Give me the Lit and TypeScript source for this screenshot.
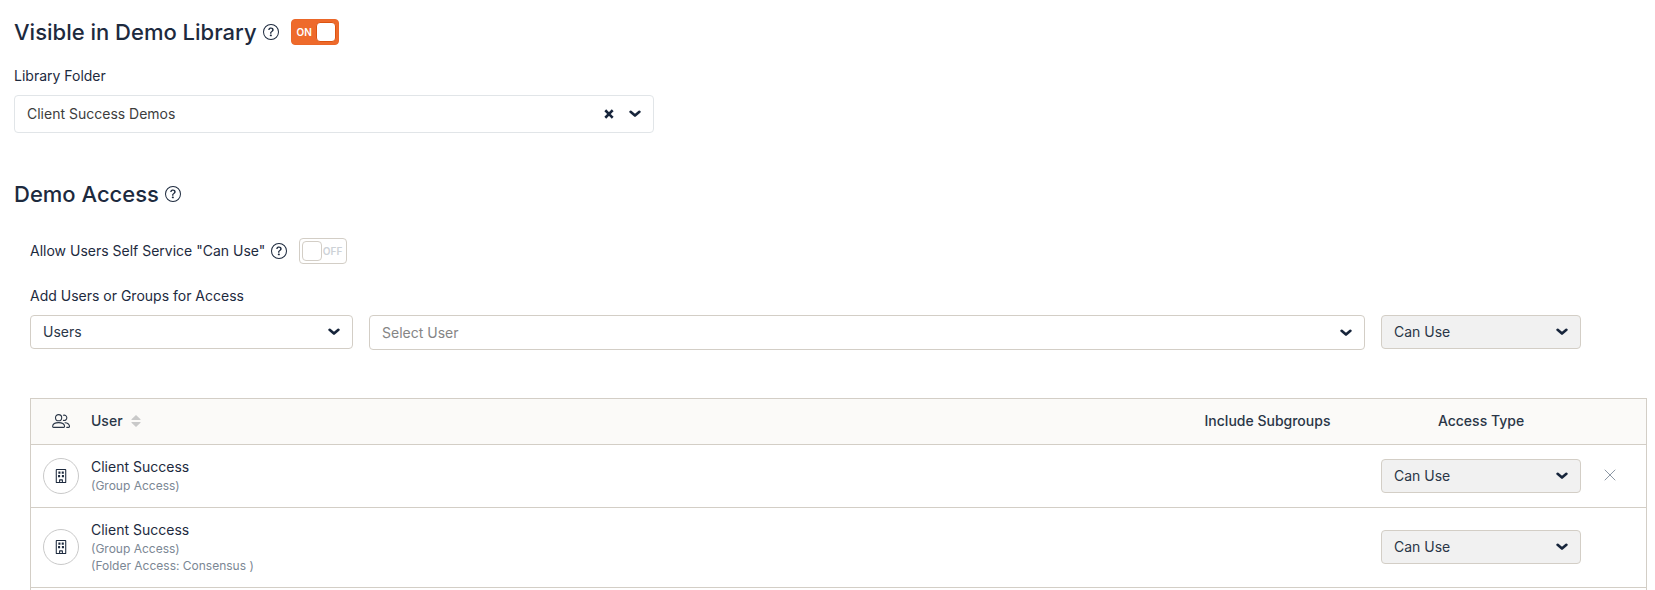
import { LitElement, html, css, svg, nothing } from "lit";
import { customElement, property, state } from "lit/decorators.js";

const chevron = html`<svg class="chevron" width="12" height="8" viewBox="0 0 12 8" aria-hidden="true">
  <path d="M1.6 1.8 6 5.6l4.4-3.8" fill="none" stroke="currentColor" stroke-width="2.6" stroke-linecap="round" stroke-linejoin="round" />
</svg>`;

const help = html`<svg width="16" height="16" viewBox="0 0 16 16" aria-hidden="true" fill="currentColor">
  <path d="M8 15A7 7 0 1 1 8 1a7 7 0 0 1 0 14m0 1A8 8 0 1 0 8 0a8 8 0 0 0 0 16" />
  <path d="M5.255 5.786a.237.237 0 0 0 .241.247h.825c.138 0 .248-.113.266-.25.09-.656.54-1.134 1.342-1.134.686 0 1.314.343 1.314 1.168 0 .635-.374.927-.965 1.371-.673.489-1.206 1.06-1.168 1.987l.003.217a.25.25 0 0 0 .25.246h.811a.25.25 0 0 0 .25-.25v-.105c0-.718.273-.927 1.01-1.486.609-.463 1.244-.977 1.244-2.056 0-1.511-1.276-2.241-2.673-2.241-1.267 0-2.655.59-2.75 2.286m1.557 5.763c0 .533.425.927 1.01.927.609 0 1.028-.394 1.028-.927 0-.552-.42-.94-1.029-.94-.584 0-1.009.388-1.009.94" />
</svg>`;

const people = html`<svg width="18" height="14" viewBox="0 0 18 14" role="img" aria-label="Type" fill="none" stroke="currentColor" stroke-width="1.1" stroke-linecap="round" stroke-linejoin="round">
  <circle cx="6.6" cy="3.7" r="3.1" />
  <path d="M.6 12.2C.9 10 3 8.600 6.600 8.600s5.700 1.400 6 3.600c0 .8-.3 1.200-1 1.200H1.600c-.7 0-1-.4-1-1.200z" />
  <path d="M11.400 1.200a2.700 2.700 0 1 1 0 5.200" />
  <path d="M13 8.700c2.600.2 4.200 1.500 4.500 3.500 0 .8-.3 1.200-1 1.200h-1.700" />
</svg>`;

const windows = [
  [5, 2.8],
  [8.8, 2.8],
  [4.6, 6.8],
  [9, 6.8],
];

const building = html`<svg width="14" height="14" viewBox="0 0 16 16" aria-hidden="true" fill="currentColor">
  ${windows.map(([x, y]) => svg`<rect x=${x} y=${y} width="2.400" height="2.600" rx=".3" />`)}
  <path d="M2 1a1 1 0 0 1 1-1h10a1 1 0 0 1 1 1v14a1 1 0 0 1-1 1H3a1 1 0 0 1-1-1zM12.800 1.200H3.200v13.600h2.600v-2.300a.7.7 0 0 1 .7-.7h3a.7.7 0 0 1 .7.700v2.300h2.600zM9 13H7v1.800h2z" fill-rule="evenodd" />
</svg>`;

const shared = css`
  *,
  *::before {
    box-sizing: border-box;
  }
  button {
    display: inline-flex;
    align-items: center;
    justify-content: center;
    padding: 0;
    border: 0;
    background: none;
    color: inherit;
    font: inherit;
    cursor: pointer;
  }
  svg {
    display: block;
    flex: none;
  }
`;

@customElement("drop-down")
class DropDown extends LitElement {
  @property() label = "";
  @property({ type: Array }) options: string[] = [];
  @property() variant = "";
  @property({ type: Boolean }) clearable = false;

  static styles = [
    shared,
    css`
      :host {
        display: block;
        min-width: 0;
      }
      .box {
        display: flex;
        align-items: center;
        position: relative;
        height: 34px;
        border: 1px solid #d3cec6;
        border-radius: 4px;
        background: #fff;
        color: #2a3647;
      }
      .muted {
        background: #f1f1f1;
      }
      .placeholder {
        height: 35px;
      }
      .folder {
        height: 38px;
        border-color: #e1e5e8;
      }
      select {
        flex: 1;
        min-width: 0;
        height: 100%;
        padding: 0 64px 0 12px;
        border: 0;
        border-radius: 4px;
        appearance: none;
        background: none;
        color: inherit;
        font: inherit;
      }
      .placeholder select {
        color: #858585;
      }
      .folder select {
        color: #3d3d3d;
      }
      .marks {
        position: absolute;
        right: 12px;
        display: flex;
        align-items: center;
        gap: 15px;
        color: #17253b;
        pointer-events: none;
      }
      .marks button {
        pointer-events: auto;
      }
    `,
  ];

  render() {
    return html`<div class="box ${this.variant}">
      <select aria-label=${this.label}>
        ${this.options.map((o) => html`<option>${o}</option>`)}
      </select>
      <span class="marks">
        ${this.clearable
          ? html`<button type="button" aria-label="Clear">
              <svg width="10" height="10" viewBox="0 0 10 10">
                <path d="m2.200 2.200 5.600 5.600M7.800 2.200 2.200 7.800" stroke="currentColor" stroke-width="2.600" stroke-linecap="square" />
              </svg>
            </button>`
          : nothing}
        ${chevron}
      </span>
    </div>`;
  }
}

@customElement("toggle-switch")
class ToggleSwitch extends LitElement {
  @property() label = "";
  @property({ type: Boolean }) on = false;

  static styles = [
    shared,
    css`
      :host {
        display: block;
      }
      .track {
        display: flex;
        align-items: center;
        justify-content: space-between;
        width: 48px;
        height: 26px;
        padding: 0 2px 0 5px;
        border: 1px solid #eb6729;
        border-radius: 4px;
        background: #ee6a2b;
        color: #fff;
        font-size: 10px;
        font-weight: 600;
      }
      .track.off {
        flex-direction: row-reverse;
        padding: 0 4px 0 2px;
        border-color: #d3cec6;
        background: #fff;
        color: #cdd2d7;
      }
      .knob {
        width: 20px;
        height: 20px;
        border: 1px solid #dc5310;
        border-radius: 4px;
        background: #fff;
      }
      .off .knob {
        border-color: #d3cec6;
      }
    `,
  ];

  render() {
    return html`<button
      type="button"
      role="switch"
      class="track ${this.on ? "" : "off"}"
      aria-label=${this.label}
      aria-checked=${this.on ? "true" : "false"}
      @click=${() => (this.on = !this.on)}
    >
      <span>${this.on ? "ON" : "OFF"}</span><span class="knob"></span>
    </button>`;
  }
}

interface Grant {
  name: string;
  notes: string[];
  removable: boolean;
}

@customElement("app-root")
class AppRoot extends LitElement {
  @state() private grants: Grant[] = [
    { name: "Client Success", notes: ["(Group Access)"], removable: true },
    { name: "Client Success", notes: ["(Group Access)", "(Folder Access: Consensus )"], removable: false },
  ];

  static styles = [
    shared,
    css`
      :host {
        display: block;
        font: 14px/20px Inter, "Open Sans", sans-serif;
        color: #1d2a3e;
        background: #fff;
      }
      main {
        display: flex;
        flex-direction: column;
        min-height: 100vh;
        padding: 18px 8px 0 14px;
      }
      h2 {
        margin: 0;
        font-size: 22px;
        line-height: 28px;
        font-weight: 500;
      }
      .line {
        display: flex;
        align-items: center;
        gap: 6px;
      }
      .line toggle-switch {
        margin-left: 6px;
      }
      .label {
        margin-bottom: 9px;
      }
      .library {
        width: 39.2%;
        margin: 20px 0 47px;
      }
      .access {
        display: flex;
        flex: 1;
        flex-direction: column;
        padding: 30px 0 0 16px;
      }
      .add {
        margin: 22px 0 48px;
      }
      .fields {
        display: grid;
        grid-template-columns: 323fr 996fr 200px;
        align-items: start;
        gap: 16px;
        margin-right: 66px;
      }
      .panel {
        flex: 1;
        border: 1px solid #d3cec6;
        border-bottom: 0;
      }
      table {
        width: 100%;
        border-collapse: collapse;
        table-layout: fixed;
      }
      th {
        height: 45px;
        padding: 0;
        background: #fbfaf8;
        color: #2a3647;
        font-weight: 500;
      }
      tr {
        border-bottom: 1px solid #d3cec6;
      }
      td {
        padding: 12px 0;
      }
      td.user {
        padding: 11px 0 13px;
      }
      .c-type {
        width: 60px;
      }
      .c-sub {
        width: 195px;
      }
      .c-access {
        width: 232px;
      }
      .c-remove {
        width: 49px;
      }
      th svg,
      .avatar {
        margin: 0 auto;
      }
      .sort {
        gap: 8px;
        color: inherit;
        font-weight: 500;
      }
      th.user {
        text-align: left;
      }
      .sort svg {
        margin: 0;
      }
      .avatar {
        display: flex;
        align-items: center;
        justify-content: center;
        width: 36px;
        height: 36px;
        border: 1px solid #c9c9c9;
        border-radius: 50%;
      }
      .name {
        line-height: 21px;
      }
      .note {
        color: #7b8794;
        font-size: 12px;
        line-height: 17px;
      }
      .select-cell {
        padding: 0 16px;
      }
      .remove {
        margin-left: 7px;
        color: #8d98a5;
      }
    `,
  ];

  render() {
    return html`<main>
      <div class="line">
        <h2>Visible in Demo Library</h2>
        <button type="button" aria-label="Help">${help}</button>
        <toggle-switch label="Visible in Demo Library" on></toggle-switch>
      </div>
      <div class="library">
        <div class="label">Library Folder</div>
        <drop-down label="Library Folder" variant="folder" clearable .options=${["Client Success Demos"]}></drop-down>
      </div>

      <div class="line">
        <h2>Demo Access</h2>
        <button type="button" aria-label="Help">${help}</button>
      </div>
      <section class="access">
        <div class="line">
          <span>Allow Users Self Service "Can Use"</span>
          <button type="button" aria-label="Help">${help}</button>
          <toggle-switch label="Allow Users Self Service"></toggle-switch>
        </div>
        <div class="add">
          <div class="label">Add Users or Groups for Access</div>
          <div class="fields">
            <drop-down label="Users or groups" .options=${["Users", "Groups"]}></drop-down>
            <drop-down label="User" variant="placeholder" .options=${["Select User"]}></drop-down>
            <drop-down label="Access type" variant="muted" .options=${["Can Use"]}></drop-down>
          </div>
        </div>
        <div class="panel">
          <table>
            <colgroup>
              <col class="c-type" />
              <col />
              <col class="c-sub" />
              <col class="c-access" />
              <col class="c-remove" />
            </colgroup>
            <thead>
              <tr>
                <th>${people}</th>
                <th class="user">
                  <button type="button" class="sort">
                    User
                    <svg width="10" height="12" viewBox="0 0 10 12" fill="#c9c9c9" aria-hidden="true">
                      <path d="M5 0 9.500 4.200v.8H.5v-.8zM5 12 9.500 7.800V7H.5v.8z" />
                    </svg>
                  </button>
                </th>
                <th>Include Subgroups</th>
                <th>Access Type</th>
                <th></th>
              </tr>
            </thead>
            <tbody>
              ${this.grants.map(
                (g) => html`<tr>
                  <td><div class="avatar">${building}</div></td>
                  <td class="user">
                    <div class="name">${g.name}</div>
                    ${g.notes.map((n) => html`<div class="note">${n}</div>`)}
                  </td>
                  <td></td>
                  <td class="select-cell">
                    <drop-down label="Access type" variant="muted" .options=${["Can Use"]}></drop-down>
                  </td>
                  <td>
                    ${g.removable
                      ? html`<button
                          type="button"
                          class="remove"
                          aria-label="Remove"
                          @click=${() => (this.grants = this.grants.filter((o) => o !== g))}
                        >
                          <svg width="12" height="12" viewBox="0 0 12 12">
                            <path d="m1 1 10 10M11 1 1 11" stroke="currentColor" stroke-linecap="round" />
                          </svg>
                        </button>`
                      : nothing}
                  </td>
                </tr>`
              )}
            </tbody>
          </table>
        </div>
      </section>
    </main>`;
  }
}
